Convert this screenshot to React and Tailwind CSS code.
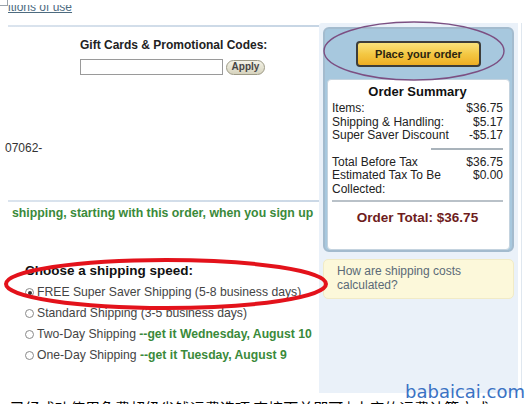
import React from 'react'

const FONT = { fontFamily: '"Liberation Sans", Arial, sans-serif' }

const GREEN = 'text-[#3a8a3a]'

function Radio({ checked }) {
  return (
    <span className="w-[9px] h-[9px] rounded-full border border-[#8a8a8a] bg-white flex items-center justify-center shrink-0">
      {checked && <span className="w-[4px] h-[4px] rounded-full bg-[#333]" />}
    </span>
  )
}

const SHIPPING = [
  { label: 'FREE Super Saver Shipping (5-8 business days)', checked: true },
  { label: 'Standard Shipping (3-5 business days)' },
  { label: 'Two-Day Shipping ', extra: '--get it Wednesday, August 10' },
  { label: 'One-Day Shipping ', extra: '--get it Tuesday, August 9' },
]

const ROWS_TOP = [
  ['Items:', '$36.75'],
  ['Shipping & Handling:', '$5.17'],
  ['Super Saver Discount', '-$5.17'],
]

const ROWS_BOTTOM = [
  ['Total Before Tax', '$36.75'],
  ['Estimated Tax To Be', '$0.00'],
  ['Collected:', ''],
]

function SummaryRow({ label, value }) {
  return (
    <div className="flex justify-between text-[12px] leading-[13.5px] text-[#222]">
      <span>{label}</span>
      <span>{value}</span>
    </div>
  )
}

export default function App() {
  return (
    <div className="relative w-[529px] h-[404px] overflow-hidden bg-white" style={FONT}>
      <div className="flex h-[393px]">
        {/* left: checkout form */}
        <div className="w-[319px] overflow-hidden">
          <div className="h-[25px] pl-[8px] pt-[5px]">
            <div className="h-[9px] overflow-hidden">
              <div className="-mt-[5px] text-[12px] leading-[14px] text-[#4d6b7f] underline">itions of use</div>
            </div>
          </div>
          <div className="ml-[8px] h-[2px] bg-gradient-to-r from-[#dbe4ee] to-[#c6d5e4]" />

          <div className="pl-[80px] pt-[11px]">
            <div className="text-[12px] leading-[14px] font-bold text-[#222]">Gift Cards &amp; Promotional Codes:</div>
            <div className="flex items-center mt-[7px] gap-[3px]">
              <div className="w-[143px] h-[16px] border border-[#9a9a9a] bg-white" />
              <button className="w-[39px] h-[15px] rounded-full border border-[#9d9a86] bg-gradient-to-b from-[#f4f3e8] to-[#d6d3bd] text-[10px] leading-none font-bold text-[#454545]">
                Apply
              </button>
            </div>
          </div>

          <div className="mt-[66px] pl-[8px] overflow-hidden">
            <div className="-ml-[3px] text-[12px] leading-[14px] text-[#333]">07062-</div>
          </div>

          <div className="mt-[45px] ml-[8px] h-[2px] bg-gradient-to-r from-[#dbe4ee] to-[#cbd8e6]" />

          <div className={`mt-[4px] pl-[12px] text-[12.3px] leading-[14px] font-bold whitespace-nowrap ${GREEN}`}>
            shipping, starting with this order, when you sign up
          </div>

          <div className="mt-[44px] pl-[25px] text-[13.5px] leading-[14px] font-bold text-[#111]">Choose a shipping speed:</div>
          <div className="mt-[4px] pl-[25px]">
            {SHIPPING.map(s => (
              <div key={s.label} className="h-[21px] flex items-center gap-[3px] whitespace-nowrap text-[12.2px] text-[#444]">
                <Radio checked={s.checked} />
                <span>
                  {s.label}
                  {s.extra && <span className={`font-bold ${GREEN}`}>{s.extra}</span>}
                </span>
              </div>
            ))}
          </div>
        </div>

        {/* right: order summary column */}
        <div className="w-[199px] mt-[23px] h-[370px] bg-[#eaf1f9] px-[4px] pt-[4px] rounded-tl-[3px]">
          <div className="h-[225px] rounded-[6px] border-2 border-[#a3bbce] bg-[#a7c8de] px-[2px] pb-[2px]">
            <div className="flex justify-center pt-[12px] pb-[12px]">
              <button className="w-[125px] h-[26px] rounded-[4px] border-2 border-[#3d3d3a] bg-gradient-to-b from-[#f9e27a] via-[#f4c843] to-[#eeae22] text-[11px] font-bold text-[#2a2410]">
                Place your order
              </button>
            </div>
            <div className="h-[171px] rounded-[4px] border border-[#c4d3df] bg-white pl-[4px] pr-[6px] pt-[5px]">
              <div className="text-center text-[13px] leading-[14px] font-bold text-[#111]">Order Summary</div>
              <div className="mt-[3px]">
                {ROWS_TOP.map(([l, v]) => <SummaryRow key={l} label={l} value={v} />)}
              </div>
              <div className="mt-[5px] ml-auto w-[72px] h-[2px] bg-[#a9b3bb]" />
              <div className="mt-[6px]">
                {ROWS_BOTTOM.map(([l, v]) => <SummaryRow key={l} label={l} value={v} />)}
              </div>
              <div className="mt-[4px] h-[2px] bg-[#b9c1c8]" />
              <div className="mt-[8px] text-center text-[13.5px] leading-[16px] font-bold text-[#6e1c1c]">Order Total: $36.75</div>
            </div>
          </div>

          <div className="mt-[7px] h-[40px] rounded-[5px] bg-[#fcf8da] border border-[#f1ebc6] pl-[13px] pt-[4px] text-[12px] leading-[14px] text-[#5b6a77]">
            How are shipping costs<br />calculated?
          </div>
        </div>
        <div className="ml-[3px] w-px h-[370px] mt-[23px] bg-[#dfe7ef]" />
      </div>

      <div className="pl-[10px] pt-[6px] text-[15px] leading-[18px] text-black whitespace-nowrap" style={{ fontFamily: '"Noto Sans CJK SC", sans-serif' }}>
        已经成功使用免费超级省钱运费选项 直接下单即可 | 本店的运费计算方式
      </div>

      {/* annotations */}
      <div className="absolute left-0 top-0 w-[8px] h-[6px] border border-[#9aa3ab] border-t-0 border-l-0" />
      <svg className="absolute left-[320px] top-[19px]" width="190" height="64" viewBox="0 0 190 64">
        <ellipse cx="94" cy="32" rx="90" ry="29" fill="none" stroke="#7c4f82" strokeWidth="1.4" />
      </svg>
      <svg className="absolute left-0 top-[256px]" width="332" height="56" viewBox="0 0 332 56">
        <ellipse cx="166" cy="28" rx="160" ry="24" fill="none" stroke="#e3121b" strokeWidth="4" />
      </svg>
      <div className="absolute left-[405px] top-[381px] text-[18px] leading-[22px] text-[#3a72c4]" style={{ fontFamily: '"DejaVu Sans", sans-serif' }}>
        babaicai.com
      </div>
    </div>
  )
}
